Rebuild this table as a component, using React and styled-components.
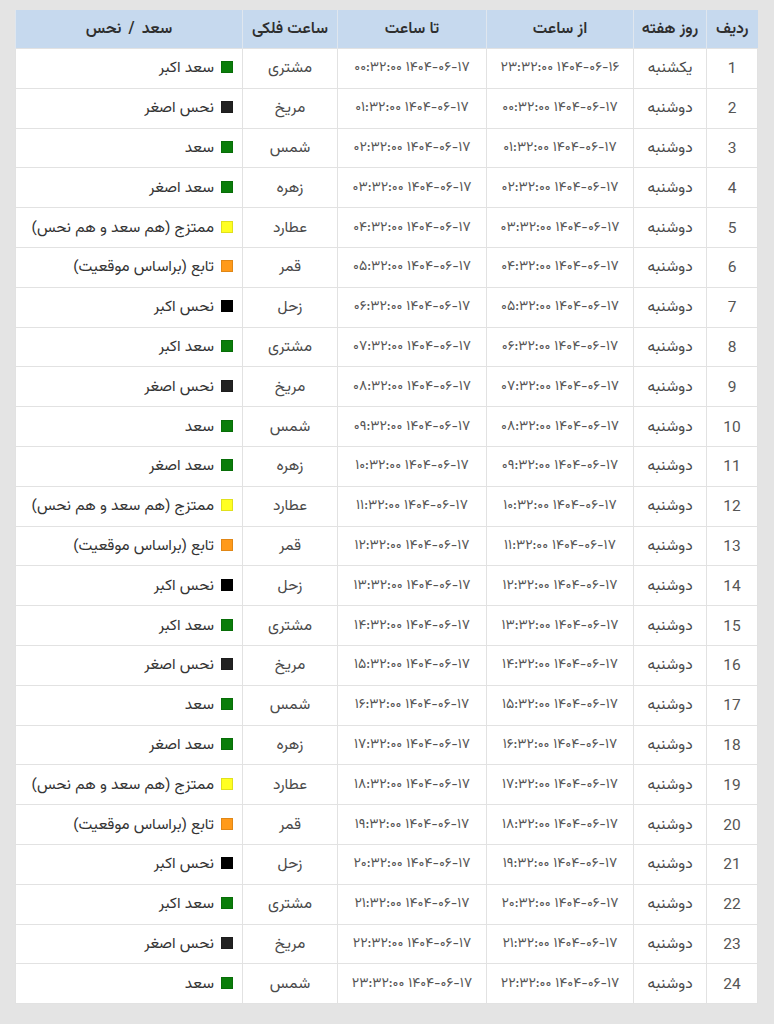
import React from "react";
import styled, { createGlobalStyle } from "styled-components";

const GlobalStyle = createGlobalStyle`
  html, body {
    margin: 0;
    padding: 0;
    background: #e4e4e4;
  }
  body {
    font-family: Vazirmatn, "Noto Sans Arabic", "DejaVu Sans", sans-serif;
  }
`;

const KINDS = {
  مشتری: { label: "سعد اکبر", color: "#0a7d0a" },
  مریخ: { label: "نحس اصغر", color: "#222222" },
  شمس: { label: "سعد", color: "#0a7d0a" },
  زهره: { label: "سعد اصغر", color: "#0a7d0a" },
  عطارد: { label: "ممتزج (هم سعد و هم نحس)", color: "#ffff22" },
  قمر: { label: "تابع (براساس موقعیت)", color: "#ff9a1a" },
  زحل: { label: "نحس اکبر", color: "#000000" },
};

const PLANETS = ["مشتری", "مریخ", "شمس", "زهره", "عطارد", "قمر", "زحل"];

const fa = (s) => String(s).replace(/\d/g, (d) => "۰۱۲۳۴۵۶۷۸۹"[d]);
const pad = (n) => String(n).padStart(2, "0");
const stamp = (day, hour) => fa(`1404-06-${day} ${pad(hour)}:32:00`);

const rows = Array.from({ length: 24 }, (_, i) => {
  const planet = PLANETS[i % 7];
  return {
    n: i + 1,
    weekday: i === 0 ? "یکشنبه" : "دوشنبه",
    from: i === 0 ? stamp(16, 23) : stamp(17, i - 1),
    to: stamp(17, i),
    planet,
    ...KINDS[planet],
  };
});

export default function App() {
  return (
    <>
      <GlobalStyle />
      <Page>
        <Table>
          <colgroup>
            <col style={{ width: 51 }} />
            <col style={{ width: 73 }} />
            <col style={{ width: 147 }} />
            <col style={{ width: 149 }} />
            <col style={{ width: 95 }} />
            <col style={{ width: 227 }} />
          </colgroup>
          <thead>
            <tr>
              <Th>ردیف</Th>
              <Th>روز هفته</Th>
              <Th>از ساعت</Th>
              <Th>تا ساعت</Th>
              <Th>ساعت فلکی</Th>
              <Th $spaced>سعد / نحس</Th>
            </tr>
          </thead>
          <tbody>
            {rows.map((r) => (
              <Row key={r.n}>
                <NumCell>{r.n}</NumCell>
                <Td>{r.weekday}</Td>
                <TimeCell>{r.from}</TimeCell>
                <TimeCell>{r.to}</TimeCell>
                <Td>{r.planet}</Td>
                <KindCell>
                  <Swatch $color={r.color} />
                  {r.label}
                </KindCell>
              </Row>
            ))}
          </tbody>
        </Table>
      </Page>
    </>
  );
}

const Page = styled.div`
  min-height: 1024px;
  padding: 10px 16px 0;
  box-sizing: border-box;
  direction: rtl;
`;

const Table = styled.table`
  width: 742px;
  table-layout: fixed;
  border-collapse: collapse;
  background: #fff;
  color: #4a4a4a;
  font-size: 15.5px;
`;

const Th = styled.th`
  height: 38px;
  padding: 0;
  background: #c6d9ee;
  color: #2f2f2f;
  font-size: 16px;
  font-weight: 600;
  text-align: center;
  border-left: 1px solid #dfe6ee;
  word-spacing: ${(p) => (p.$spaced ? "3px" : "normal")};
`;

const Row = styled.tr`
  height: 39.8px;
`;

const Td = styled.td`
  padding: 0;
  text-align: center;
  border: 1px solid #e2e2e2;
  white-space: nowrap;
`;

const NumCell = styled(Td)`
  font-family: Roboto, "Liberation Sans", sans-serif;
  font-size: 15.5px;
  color: #555;
`;

const TimeCell = styled(Td)`
  font-size: 14px;
  color: #555;
`;

const KindCell = styled(Td)`
  text-align: right;
  padding-right: 9px;
  color: #333;
`;

const Swatch = styled.span`
  display: inline-block;
  width: 10px;
  height: 10px;
  margin-left: 7px;
  vertical-align: -1px;
  background: ${(p) => p.$color};
  border: 1px solid rgba(0, 0, 0, 0.12);
`;
